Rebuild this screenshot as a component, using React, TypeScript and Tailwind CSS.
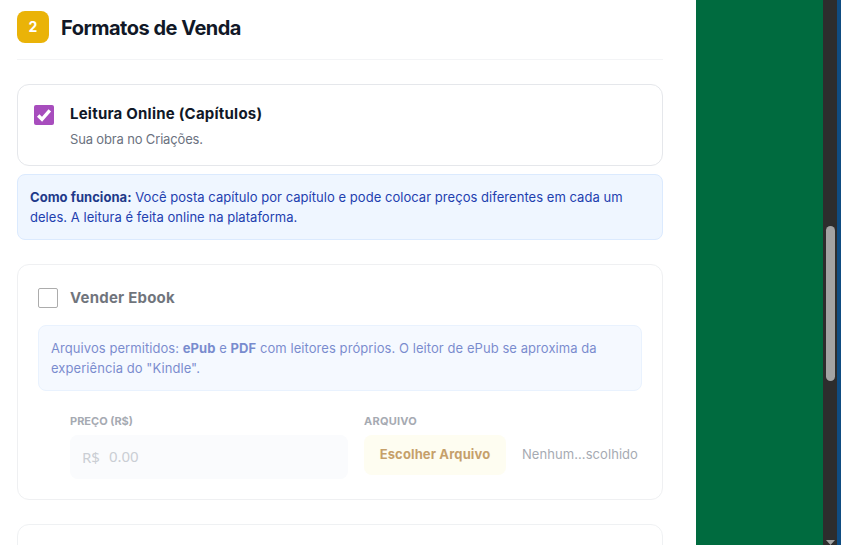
import React from "react";

export default function App() {
  return (
    <div className="flex h-[545px] w-[841px] overflow-hidden bg-white font-['Inter',sans-serif]">
      <main className="w-[696px] shrink-0 bg-white px-[17px] pt-[11px] pr-[33px]">
        <header className="flex items-center gap-3 border-b border-[#f3f4f6] pb-4">
          <div className="flex h-8 w-8 items-center justify-center rounded-lg bg-[#eab308] text-sm font-bold text-white">2</div>
          <h2 className="pt-px text-xl font-bold leading-7 tracking-[-0.025em] text-[#111827]">Formatos de Venda</h2>
        </header>

        <section className="mt-6 flex items-start gap-4 rounded-xl border border-[#e5e7eb] p-4">
          <div className="mt-1 flex h-5 w-5 shrink-0 items-center justify-center rounded-[2px] bg-[#a74dbd]">
            <svg viewBox="0 0 20 20" className="h-5 w-5" fill="none">
              <path d="M4.2 10.5 8 14.3 15.8 5.4" stroke="white" strokeWidth="3.4" />
            </svg>
          </div>
          <div>
            <div className="pt-px text-[15px] font-bold leading-6 tracking-[0.015em] text-[#111827]">Leitura Online (Capítulos)</div>
            <div className="mt-[3px] text-[13px] leading-5 tracking-[-0.012em] text-[#6b7280]">Sua obra no Criações.</div>
          </div>
        </section>

        <div className="mt-2 rounded-lg border border-[#dbeafe] bg-[#eff6ff] p-3 text-[13px] leading-5 tracking-[0.003em] text-[#1e40af]">
          <strong className="font-bold text-[#1e3a8a]">Como funciona:</strong> Você posta capítulo por capítulo e pode colocar preços diferentes em cada um deles. A leitura é feita online na plataforma.
        </div>

        <section className="mt-6 rounded-xl border border-[#e5e7eb] px-5 pt-[22px] pb-5 opacity-60">
          <div className="flex items-center gap-3">
            <div className="h-5 w-5 rounded-[2px] border border-[#767676] bg-white" />
            <span className="text-[15px] font-bold tracking-[0.015em] text-[#111827]">Vender Ebook</span>
          </div>
          <div className="mt-[15px] rounded-lg border border-[#dbeafe] bg-[#eff6ff] p-3 text-[13px] leading-5 tracking-[0.005em] text-[#1e40af]">
            Arquivos permitidos: <strong className="font-bold">ePub</strong> e <strong className="font-bold">PDF</strong> com leitores próprios. O leitor de ePub se aproxima da experiência do "Kindle".
          </div>
          <div className="mt-[22px] grid grid-cols-2 gap-4 pl-8">
            <div>
              <div className="text-[11px] font-bold uppercase leading-4 text-[#6b7280]">Preço (R$)</div>
              <div className="mt-1.5 flex h-11 items-center rounded-lg bg-[#f7f9fc] px-3 font-['Noto_Sans',sans-serif] text-[#a8aeb8]">
                <span className="pt-0.5 text-[15px]">R$</span>
                <span className="ml-[9px] text-[15px]">0.00</span>
              </div>
            </div>
            <div>
              <div className="text-[11px] font-bold uppercase leading-4 tracking-[0.02em] text-[#6b7280]">Arquivo</div>
              <div className="mt-1.5 flex items-center gap-4">
                <div className="flex h-10 w-[142px] shrink-0 items-center justify-center rounded-lg bg-[#fefce8] pt-px text-[13px] font-bold tracking-[0.01em] text-[#a16207]">Escolher Arquivo</div>
                <span className="whitespace-nowrap pt-px text-[13px] tracking-[0.005em] text-[#6b7280]">Nenhum...scolhido</span>
              </div>
            </div>
          </div>
        </section>

        <section className="mt-6 h-20 rounded-xl border border-[#e5e7eb] opacity-60" />
      </main>

      <div className="flex-1 bg-[#006b3f]" />

      <div className="relative w-[14px] shrink-0 bg-[#2d2d2d] pl-[3px] pt-[226px]">
        <div className="h-[155px] w-[9px] rounded-full bg-[#a3a3a3]" />
        <svg viewBox="0 0 9 5" className="absolute bottom-0 left-[3px] h-[5px] w-[9px]">
          <path d="M0 0H9L4.5 5Z" fill="#a3a3a3" />
        </svg>
      </div>
      <div className="w-1 shrink-0 bg-[#0f4c81]" />
    </div>
  );
}
